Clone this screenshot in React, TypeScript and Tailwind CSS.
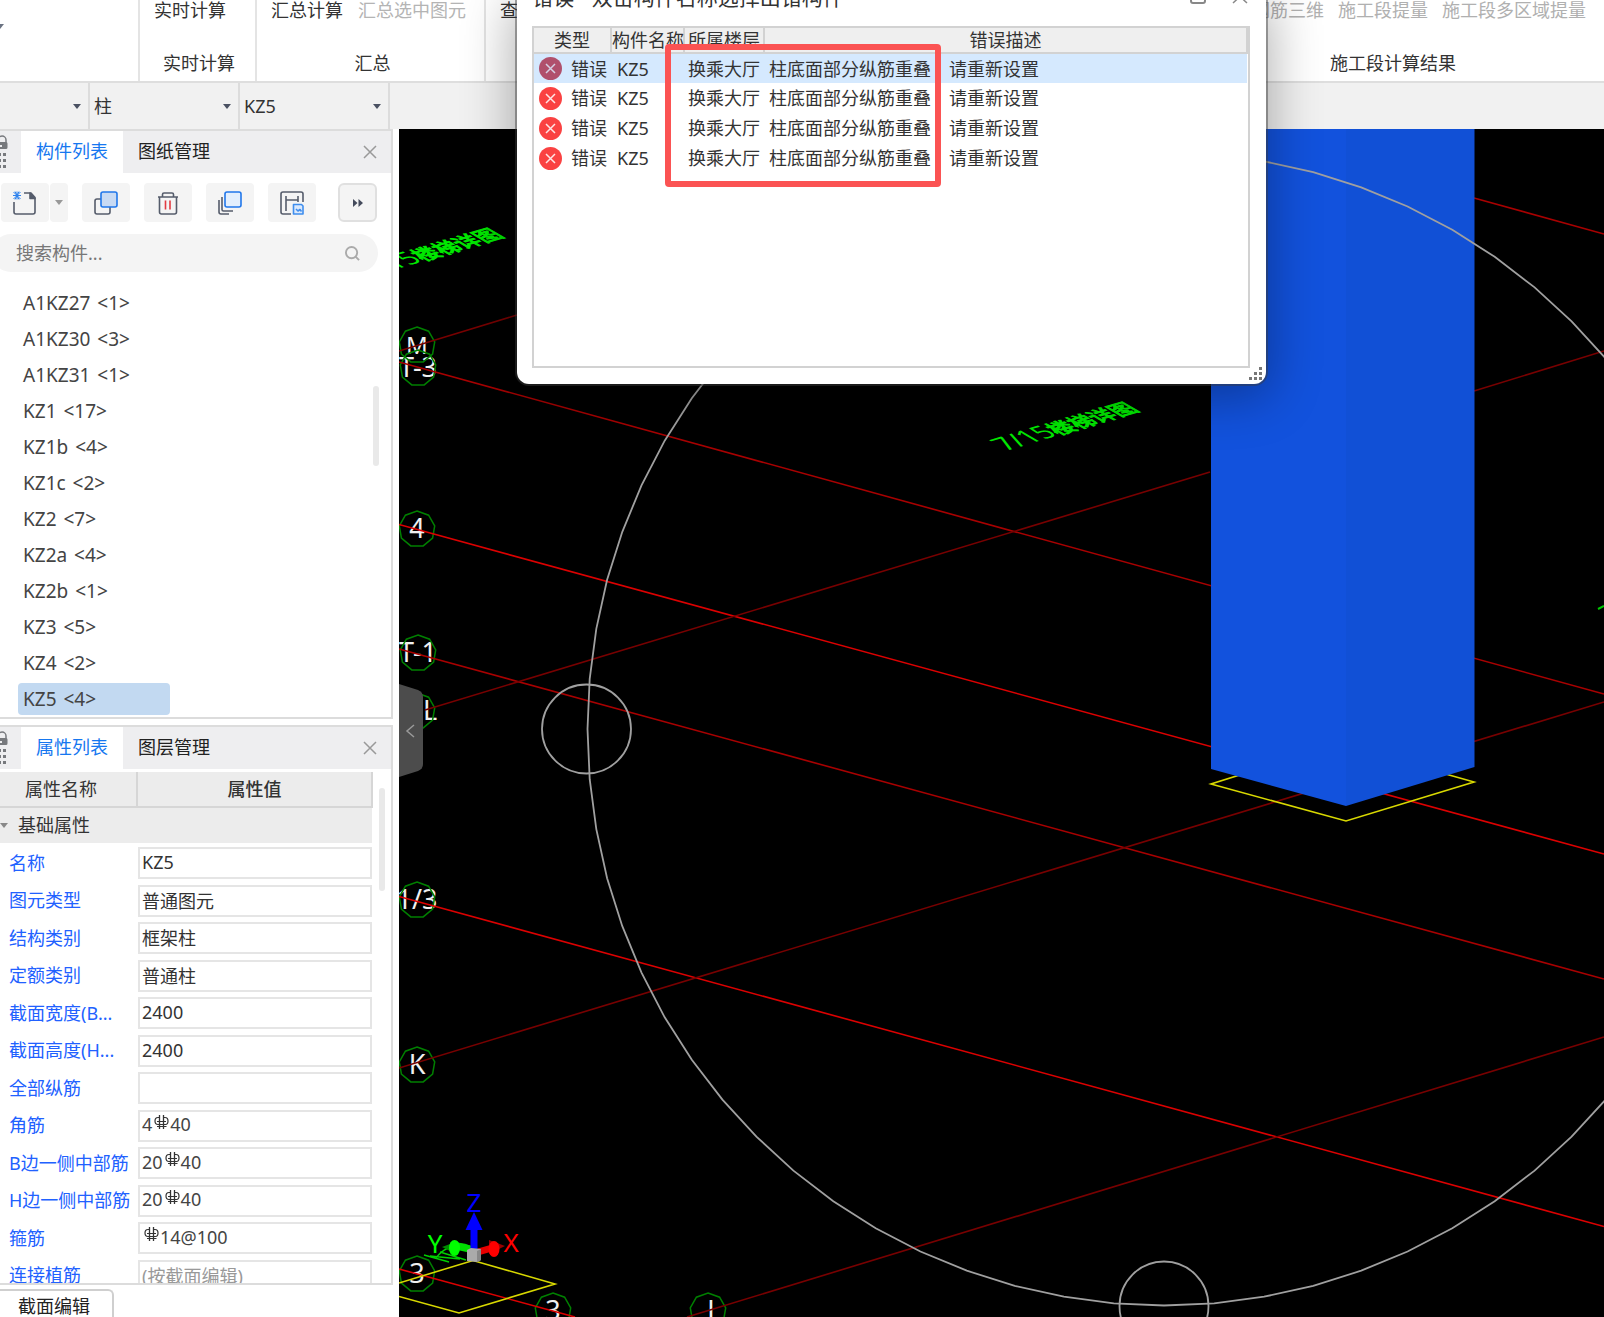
import React from "react";

const components: [string, string][] = [
  ["A1KZ27", "<1>"],
  ["A1KZ30", "<3>"],
  ["A1KZ31", "<1>"],
  ["KZ1", "<17>"],
  ["KZ1b", "<4>"],
  ["KZ1c", "<2>"],
  ["KZ2", "<7>"],
  ["KZ2a", "<4>"],
  ["KZ2b", "<1>"],
  ["KZ3", "<5>"],
  ["KZ4", "<2>"],
  ["KZ5", "<4>"],
];

type Property = { label: string; value?: string; rebar?: [string, string]; muted?: boolean };

const properties: Property[] = [
  { label: "名称", value: "KZ5" },
  { label: "图元类型", value: "普通图元" },
  { label: "结构类别", value: "框架柱" },
  { label: "定额类别", value: "普通柱" },
  { label: "截面宽度(B...", value: "2400" },
  { label: "截面高度(H...", value: "2400" },
  { label: "全部纵筋", value: "" },
  { label: "角筋", rebar: ["4", "40"] },
  { label: "B边一侧中部筋", rebar: ["20", "40"] },
  { label: "H边一侧中部筋", rebar: ["20", "40"] },
  { label: "箍筋", rebar: ["", "14@100"] },
  { label: "连接植筋", value: "(按截面编辑)", muted: true },
];

function Caret({ className = "" }: { className?: string }) {
  return (
    <svg className={className} width="8" height="5" viewBox="0 0 8 5" aria-hidden="true">
      <path d="M0 0h8L4 5z" fill="currentColor" />
    </svg>
  );
}

function RebarMark() {
  return (
    <svg className="mr-px mb-1.5 ml-0.5 shrink-0" width="15" height="16" viewBox="0 0 15 16" fill="none" stroke="#333" aria-hidden="true">
      <path d="M5.500 1v14M9.500 1v14" strokeWidth="1.300" />
      <path d="M5.500 3.500H4Q1 3.500 1 7t3 3.500h7.500Q14 10.500 14 7t-3-3.500H9.500M3 7.500h9M3 12.500h9.500" strokeWidth="1.200" />
    </svg>
  );
}

function Ribbon() {
  return (
    <header className="flex h-[83px] shrink-0 justify-between border-b-2 border-[#dedede] bg-white text-[18px] leading-5 text-[#333]">
      <div className="flex">
        <div className="flex w-[140px] items-start border-r-2 border-[#e4e4e4] pt-6 text-gray-500">
          <Caret className="-ml-1" />
        </div>
        <div className="flex w-[117px] flex-col justify-between border-r-2 border-[#e4e4e4] pb-2 pl-3.5">
          <button className="self-start">实时计算</button>
          <span className="pl-[9px]">实时计算</span>
        </div>
        <div className="flex w-[229px] flex-col justify-between border-r-2 border-[#e4e4e4] pb-2">
          <div className="flex gap-[15px] pl-3.5">
            <button>汇总计算</button>
            <button disabled className="text-[#b4b4b4]">汇总选中图元</button>
          </div>
          <span className="self-center pl-1">汇总</span>
        </div>
        <div className="pl-3.5">
          <button>查看</button>
        </div>
      </div>
      <div className="flex w-[364px] flex-col justify-between pb-2">
        <div className="flex justify-end gap-3.5 pr-[18px] text-[#b0b0b0]">
          <button disabled>钢筋三维</button>
          <button disabled>施工段提量</button>
          <button disabled>施工段多区域提量</button>
        </div>
        <span className="pl-[90px]">施工段计算结果</span>
      </div>
    </header>
  );
}

function ToolbarSelect({ label, value, width }: { label: string; value: string; width: string }) {
  return (
    <label className={`relative flex items-center border-r-2 border-[#dcdcdc] ${width}`}>
      <select aria-label={label} defaultValue={value} className="h-full w-full appearance-none bg-transparent pl-1 text-[18px] text-[#333] outline-none">
        <option>{value}</option>
      </select>
      <Caret className="pointer-events-none absolute right-[7px] text-[#4a5162]" />
    </label>
  );
}

function PanelTabs({ active, other }: { active: string; other: string }) {
  return (
    <div className="flex h-11 shrink-0 items-stretch border-t-2 border-[#dcdcdc] bg-[#eeeef0] text-[18px]" role="tablist">
      <div className="flex w-[21px] items-center text-[#77797d]">
        <svg width="8" height="34" viewBox="0 0 8 34" aria-hidden="true">
          <path d="M-2 8V5a4 4 0 0 1 8 0v3" fill="none" stroke="currentColor" strokeWidth="1.500" />
          <path d="M0 7h6a1.500 1.500 0 0 1 1.500 1.500v4A1.500 1.500 0 0 1 6 14H0z" fill="currentColor" />
          <path d="M0 10h2v2H0z" fill="#eeeef0" />
          <path d="M0 18h1v3H0zM3 18h3v3H3zM0 24h1v3H0zM3 24h3v3H3zM0 30h1v3H0zM3 30h3v3H3z" fill="currentColor" />
        </svg>
      </div>
      <button role="tab" aria-selected="true" className="w-[102px] bg-white pb-px text-[#1677f0]">{active}</button>
      <button role="tab" aria-selected="false" className="w-[102px] pb-px text-[#222]">{other}</button>
      <button aria-label="关闭" className="mr-3.5 ml-auto text-[#999]">
        <svg width="14" height="14" viewBox="0 0 14 14" fill="none" stroke="currentColor" strokeWidth="1.500">
          <path d="M1 1l12 12M13 1L1 13" />
        </svg>
      </button>
    </div>
  );
}

function IconButton({ label, children }: { label: string; children: React.ReactNode }) {
  return (
    <button aria-label={label} className="flex h-[39px] w-12 items-center justify-center rounded bg-[#f4f4f4]">
      <svg width="26" height="26" viewBox="0 0 26 26" fill="none" stroke="#555c6b" strokeWidth="1.600" strokeLinejoin="round">
        {children}
      </svg>
    </button>
  );
}

function ComponentPanel() {
  return (
    <section className="flex h-[590px] shrink-0 flex-col border-r-2 border-b-2 border-[#dcdcdc] bg-white">
      <PanelTabs active="构件列表" other="图纸管理" />
      <div className="flex items-center gap-3.5 pt-2.5 pl-px">
        <div className="flex gap-px">
          <IconButton label="新建">
            <path d="M12 3h7l4 4.500V22a2 2 0 0 1-2 2H4a2 2 0 0 1-2-2V12" />
            <path d="M18 3v5.500h5z" fill="#555c6b" />
            <path d="M1.500 2l7 7M8.500 2l-7 7M5 1.500v8M1 5.500h8M3 1.500l4 8M7 1.500l-4 8" stroke="#2f83ee" strokeWidth="1" />
          </IconButton>
          <button aria-label="新建选项" className="flex h-[39px] w-[18px] items-center justify-center rounded bg-[#f4f4f4] text-[#999]">
            <Caret />
          </button>
        </div>
        <IconButton label="复制">
          <rect x="2" y="9" width="15" height="15" rx="2" />
          <rect x="8" y="2" width="16" height="15" rx="2" fill="#c8daf3" stroke="#2177ea" />
        </IconButton>
        <IconButton label="删除">
          <path d="M3 7h20M7.500 6.500V4.500A1.500 1.500 0 0 1 9 3h8a1.500 1.500 0 0 1 1.500 1.500v2M4.500 7v15a2 2 0 0 0 2 2h13a2 2 0 0 0 2-2V7" />
          <path d="M10.500 10.500v9M15 10.500v9" stroke="#e23b42" />
        </IconButton>
        <IconButton label="层间复制">
          <path d="M5 7v12.500A1.500 1.500 0 0 0 6.500 21H16M2 10v12a2 2 0 0 0 2 2h8" />
          <rect x="8" y="2" width="16" height="15" rx="2" fill="#e3effd" stroke="#2177ea" />
        </IconButton>
        <IconButton label="存档">
          <path d="M12 24H4a2 2 0 0 1-2-2V4a2 2 0 0 1 2-2h18a2 2 0 0 1 2 2v8M7 6v15M19 6v6M7 10h12" />
          <path d="M14.500 14.500h8l1.500 1.500v8h-9.500zM17 19l2 2 2-1.500 1.500 2" stroke="#3f8eee" fill="#dbe9fc" />
        </IconButton>
        <button aria-label="更多" className="ml-2 flex h-[39px] w-[39px] items-center justify-center rounded-md border-2 border-[#e0e0e0] bg-[#f4f4f4]">
          <svg width="10" height="8" viewBox="0 0 10 8" fill="#444b5c">
            <path d="M0 0l4.500 4L0 8zM5.500 0L10 4 5.500 8z" />
          </svg>
        </button>
      </div>
      <label className="mt-3 mr-[13px] -ml-2 flex h-[38px] items-center rounded-full bg-[#f4f4f4] pr-4.5 pl-6">
        <input aria-label="搜索构件" placeholder="搜索构件..." className="min-w-0 flex-1 bg-transparent text-[18px] outline-none placeholder:text-[#777]" />
        <svg width="15" height="15" viewBox="0 0 16 16" fill="none" stroke="#aaa" strokeWidth="2">
          <circle cx="7" cy="7" r="6" />
          <path d="M11 11l4 4" />
        </svg>
      </label>
      <div className="mt-[13px] flex min-h-0 flex-1 justify-between">
        <ul className="w-[170px] pl-4.5 text-[19px] text-[#444]">
          {components.map(([name, count], i) => (
            <li key={name} className="py-0.5">
              <button className={`h-8 w-full rounded pl-[5px] text-left ${i === 11 ? "bg-[#c2d9f1]" : ""}`}>
                {name} <span className="ml-0.5">{count}</span>
              </button>
            </li>
          ))}
        </ul>
        <div className="mt-[101px] mr-3 h-20 w-1.5 rounded-full bg-[#e9e9e9]" />
      </div>
    </section>
  );
}

function PropertyPanel() {
  return (
    <section className="mt-[6px] flex min-h-0 flex-1 flex-col border-r-2 border-b-2 border-[#dcdcdc] bg-white text-[18px]">
      <PanelTabs active="属性列表" other="图层管理" />
      <div className="flex min-h-0 flex-1 justify-between pt-[3px]">
        <div className="flex min-h-0 w-[373px] flex-col overflow-hidden">
          <div className="flex h-9 shrink-0 border-b-2 border-[#d6d6d6] bg-[#ececec] text-[#333]">
            <div className="flex w-[138px] items-center border-r-2 border-[#d6d6d6] pl-[25px]">属性名称</div>
            <div className="flex flex-1 items-center justify-center border-r-2 border-[#d6d6d6] font-medium">属性值</div>
          </div>
          <button className="mr-px flex h-[35px] shrink-0 items-center gap-2.5 bg-[#ececec] text-[#333]">
            <Caret className="text-[#888]" />
            基础属性
          </button>
          <div className="pt-px">
            {properties.map((p, i) => (
              <div key={p.label} className={`flex items-center ${i % 2 ? "h-[37px]" : "h-[38px]"}`}>
                <label htmlFor={`prop-${i}`} className="w-[129px] shrink-0 pl-[9px] whitespace-nowrap text-[#2161ff]">
                  {p.label}
                </label>
                {p.rebar ? (
                  <div id={`prop-${i}`} role="textbox" tabIndex={0} aria-label={p.label} className="ml-[9px] flex h-8 w-[234px] items-center border-2 border-[#e5e5e5] pb-0.5 pl-0.5 text-[#444]">
                    {p.rebar[0]}
                    <RebarMark />
                    {p.rebar[1]}
                  </div>
                ) : (
                  <input
                    id={`prop-${i}`}
                    defaultValue={p.value}
                    className={`ml-[9px] h-8 w-[234px] border-2 border-[#e5e5e5] pb-0.5 pl-0.5 outline-none ${p.muted ? "text-[#999]" : "text-[#333]"}`}
                  />
                )}
              </div>
            ))}
          </div>
        </div>
        <div className="mt-4 mr-1.5 h-[103px] w-1.5 shrink-0 rounded-full bg-[#e9e9e9]" />
      </div>
    </section>
  );
}

const bubbles: { cx: number; cy: number; tx?: number; text: string }[] = [
  { cx: 417, cy: 345, text: "M" },
  { cx: 418, cy: 368, text: "T-3" },
  { cx: 417, cy: 529, text: "4" },
  { cx: 418, cy: 653, text: "T-1" },
  { cx: 417, cy: 711, tx: 430, text: "L" },
  { cx: 417, cy: 900, text: "1/3" },
  { cx: 417, cy: 1065, text: "K" },
  { cx: 417, cy: 1274, text: "3" },
  { cx: 553, cy: 1311, text: "3" },
  { cx: 708, cy: 1311, tx: 711, text: "J" },
];

function ring(cx: number, cy: number, r: number, n: number) {
  return Array.from({ length: n }, (_, i) => {
    const t = (i / n) * Math.PI * 2 - Math.PI / 2;
    return `${(cx + r * Math.cos(t)).toFixed(1)},${(cy + r * Math.sin(t)).toFixed(1)}`;
  }).join(" ");
}

function Scene() {
  return (
    <svg className="absolute inset-0 h-full w-full" viewBox="399 129 1205 1188" preserveAspectRatio="xMinYMin slice" aria-label="三维视图">
      <g fill="#f0f0f0" textAnchor="middle" fontFamily="'Noto Sans'">
        {bubbles.map((b, i) => (
          <text key={i} x={b.tx ?? b.cx} y={b.cy + 9} fontSize={b.text === "M" ? 24 : 27}>{b.text}</text>
        ))}
      </g>
      <g fill="none" stroke="#007f00" strokeWidth="1.500">
        {bubbles.map((b, i) => (
          <polygon key={i} points={ring(b.cx, b.cy, 18, 9)} />
        ))}
      </g>
      <g fill="none" strokeWidth="1.600">
        <path d="M399 362L1604 694M1474 198L1604 234M399 649L1604 979" stroke="#a80000" />
        <path d="M399 524.500L1604 854M399 896.500L1604 1226.500M399 1269L575 1317" stroke="#dc0000" />
        <path d="M399 351L517 315M425 710L1210 472M1474 391L1604 351M399 1068L1604 702M687 1317L1604 1037" stroke="#780000" />
      </g>
      <g fill="#00e800" stroke="#00e800" fontFamily="'Noto Sans','Noto Sans CJK SC'">
        <text transform="matrix(1.200 -0.360 1.200 0.700 1006 451)" fontSize="21" strokeWidth="0">
          7/15<tspan fontSize="17" strokeWidth="1">楼梯详图</tspan>
        </text>
        <text transform="matrix(1.200 -0.360 1.200 0.700 371 277)" fontSize="21" strokeWidth="0">
          7/15<tspan fontSize="17" strokeWidth="1">楼梯详图</tspan>
        </text>
      </g>
      <path d="M1598 609l6-3" stroke="#00c800" strokeWidth="2" />
      <path d="M1211 784L1346 821 1474 782 1339 744z" fill="none" stroke="#d8d800" strokeWidth="1.600" />
      <path d="M1211 129h135v677L1211 769z" fill="#1252dd" />
      <path d="M1346 129h128.500v638L1346 806z" fill="#1150d6" />
      <g fill="none" stroke="#a0a0a0" strokeWidth="1.800">
        <polygon points={ring(1164, 729, 576.5, 72)} />
        <circle cx="586.500" cy="729" r="44.500" />
        <circle cx="1164" cy="1306" r="44.500" />
      </g>
      <path d="M399 1283L473 1260.500 555 1284 459 1313 399 1296.500" fill="none" stroke="#d8d800" strokeWidth="1.600" />
      <path d="M424 1255l25 7M436 1258q10-14 30-13M430 1256l30 3M452 1243q15 0 22 6M440 1252l26 8" stroke="#00d000" strokeWidth="1.500" fill="none" />
      <path d="M474 1250l-18-4" stroke="#00e000" strokeWidth="7" />
      <path d="M442 1247l16-6v14z" fill="#008c00" />
      <ellipse cx="454.500" cy="1248" rx="5.500" ry="8" fill="#0f0" />
      <path d="M478 1252l14-4" stroke="#e80000" strokeWidth="7" />
      <path d="M505 1246l-16-6v14z" fill="#900" />
      <ellipse cx="494" cy="1249" rx="5.500" ry="8" fill="#f00" />
      <path d="M474 1250v-24" stroke="#00f" strokeWidth="7" />
      <path d="M474 1212l8.500 18h-17z" fill="#00f" />
      <path d="M467 1250l4-2 10 1v11l-4 2-10-1z" fill="#aaa" />
      <path d="M477 1251l4-2v11l-4 2z" fill="#888" />
      <g fontFamily="'Noto Sans'" fontSize="26" textAnchor="middle">
        <text x="474" y="1212" fill="#00f">Z</text>
        <text x="435" y="1253" fill="#0f0">Y</text>
        <text x="511" y="1252" fill="#f00">X</text>
      </g>
    </svg>
  );
}

function ErrorIcon({ selected }: { selected: boolean }) {
  return (
    <svg className="ml-[5px]" width="23" height="23" viewBox="0 0 23 23" aria-hidden="true">
      <circle cx="11.500" cy="11.500" r="11.500" fill={selected ? "#b0506c" : "#fa4242"} />
      <path d="M7 7l9 9M16 7l-9 9" stroke={selected ? "#d5d0e4" : "#ffe4e4"} strokeWidth="1.500" />
    </svg>
  );
}

function ErrorDialog() {
  return (
    <div role="dialog" aria-label="错误" className="absolute top-0 left-[517px] flex h-[384px] w-[749px] flex-col rounded-b-xl bg-white pr-4 pb-4 pl-[15px] text-[18px] text-[#333] shadow-[0_0_0_2px_rgba(60,60,60,0.45),0_8px_50px_6px_rgba(0,0,0,0.3)]">
      <div className="flex h-[26px] items-start justify-between pr-0.5">
        <h2 className="-mt-[17px] text-[21px] leading-7">错误 - 双击构件名称选择出错构件</h2>
        <div className="-mt-[11px] flex gap-[26px] text-[#888]">
          <button aria-label="最大化">
            <svg width="16" height="16" viewBox="0 0 16 16" fill="none" stroke="currentColor" strokeWidth="2">
              <rect x="1" y="1" width="14" height="13" rx="2" />
            </svg>
          </button>
          <button aria-label="关闭">
            <svg width="16" height="16" viewBox="0 0 16 16" fill="none" stroke="currentColor" strokeWidth="1.500">
              <path d="M1 1l14 13M15 1L1 14" />
            </svg>
          </button>
        </div>
      </div>
      <div className="min-h-0 flex-1 border-2 border-[#d2d2d2]">
        <table className="w-full table-fixed border-collapse whitespace-nowrap">
          <colgroup>
            <col className="w-9" />
            <col className="w-[41px]" />
            <col className="w-[73px]" />
            <col className="w-20" />
            <col />
          </colgroup>
          <thead>
            <tr className="h-[25px] bg-[#efefef] leading-5">
              <th colSpan={2} className="border-r-2 border-b-2 border-[#d2d2d2] p-0 font-normal">类型</th>
              <th className="border-r-2 border-b-2 border-[#d2d2d2] p-0 text-left font-normal">构件名称</th>
              <th className="border-r-2 border-b-2 border-[#d2d2d2] p-0 font-normal">所属楼层</th>
              <th className="border-r-2 border-b-2 border-[#d2d2d2] p-0 font-normal">错误描述</th>
            </tr>
          </thead>
          <tbody>
            {[0, 1, 2, 3].map((i) => (
              <tr key={i} className={`h-[30px] leading-5 ${i === 0 ? "bg-[#d5e9fe]" : ""}`}>
                <td className="p-0"><ErrorIcon selected={i === 0} /></td>
                <td className="p-0 pl-px">错误</td>
                <td className="p-0 pl-1.5">KZ5</td>
                <td className="p-0 pl-1">换乘大厅</td>
                <td className="p-0 pl-[5px]">柱底面部分纵筋重叠<span className="ml-[18px]">请重新设置</span></td>
              </tr>
            ))}
          </tbody>
        </table>
      </div>
      <div className="absolute top-[44px] left-[148px] h-[143px] w-[276px] rounded-sm border-[6px] border-[#fb5353]" />
      <svg className="absolute right-1 bottom-1" width="13" height="13" viewBox="0 0 13 13" fill="#777" aria-hidden="true">
        <path d="M10 0h3v3h-3zM10 5h3v3h-3zM5 5h3v3H5zM10 10h3v3h-3zM5 10h3v3H5zM0 10h3v3H0z" />
      </svg>
    </div>
  );
}

export default function App() {
  return (
    <div className="relative flex h-screen flex-col overflow-hidden bg-white font-['Noto_Sans','Noto_Sans_CJK_SC',sans-serif]">
      <Ribbon />
      <div className="flex h-[46px] shrink-0 bg-[#f1f1f1]">
        <ToolbarSelect label="楼层" value="" width="w-[90px]" />
        <ToolbarSelect label="构件类型" value="柱" width="w-[150px]" />
        <ToolbarSelect label="构件" value="KZ5" width="w-[150px]" />
      </div>
      <div className="flex min-h-0 flex-1">
        <aside className="mr-[6px] flex w-[393px] shrink-0 flex-col">
          <ComponentPanel />
          <PropertyPanel />
          <div className="flex h-8 shrink-0 items-end">
            <button className="h-7 w-[114px] rounded-tr-md border-t-2 border-r-2 border-[#cfcfcf] pt-1 pr-1 text-[18px] leading-5 text-[#222]">截面编辑</button>
          </div>
        </aside>
        <main className="relative min-w-0 flex-1 overflow-hidden bg-black">
          <Scene />
          <button aria-label="收起面板" className="absolute top-[555px] left-0 h-[93px] w-6">
            <svg width="24" height="93" viewBox="0 0 24 93">
              <path d="M0 0l19 6q5 2 5 7v67q0 5-5 7L0 93z" fill="#4c4c4c" />
              <path d="M15 41l-7 6 7 6" fill="none" stroke="#999" strokeWidth="1.500" />
            </svg>
          </button>
        </main>
      </div>
      <ErrorDialog />
    </div>
  );
}
